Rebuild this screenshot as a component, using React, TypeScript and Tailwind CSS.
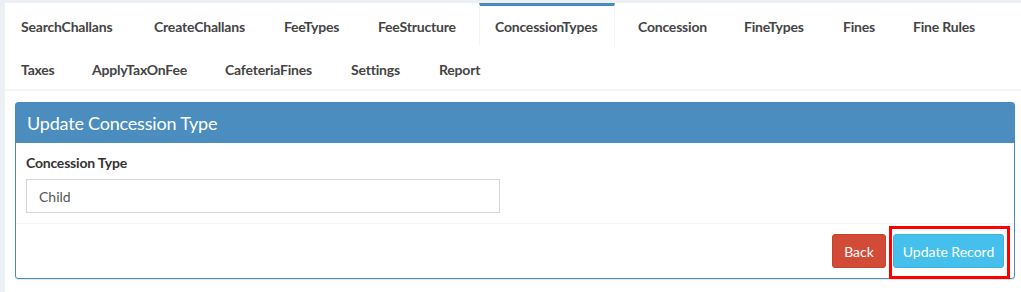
import React from "react";

type Tab = { label: string; w: string; active?: boolean };

const rowOne: Tab[] = [
  { label: "SearchChallans", w: "w-[128px]" },
  { label: "CreateChallans", w: "w-[125px]" },
  { label: "FeeTypes", w: "w-[89px]" },
  { label: "FeeStructure", w: "w-[112px]" },
  { label: "ConcessionTypes", w: "w-[136px]", active: true },
  { label: "Concession", w: "w-[101px]" },
  { label: "FineTypes", w: "w-[94px]" },
  { label: "Fines", w: "w-[65px]" },
  { label: "Fine Rules", w: "w-[95px]" },
];

const rowTwo: Tab[] = [
  { label: "Taxes", w: "w-[66px]" },
  { label: "ApplyTaxOnFee", w: "w-[128px]" },
  { label: "CafeteriaFines", w: "w-[121px]" },
  { label: "Settings", w: "w-[83px]" },
  { label: "Report", w: "w-[75px]" },
];

function TabItem({ tab }: { tab: Tab }) {
  return (
    <li
      className={`${tab.w} mr-[5px] h-[43px] border-t-[3px] ${
        tab.active
          ? "border-t-[#4a8bbd] border-x border-x-[#f4f4f4] mr-[7px]"
          : "border-t-transparent border-x border-x-transparent"
      }`}
    >
      <a className="block px-[15px] pt-[11px] text-[14px] leading-[20px] font-bold text-[#444] whitespace-nowrap tracking-[-0.2px]">
        {tab.label}
      </a>
    </li>
  );
}

export default function App() {
  return (
    <div
      className="min-h-screen bg-[#ecf0f5] pt-[3px] pl-[5px] flex flex-col"
      style={{ fontFamily: "Lato, 'Open Sans', sans-serif" }}
    >
      <div className="flex-1 bg-white flex flex-col">
        <div className="border-b-2 border-[#f4f4f4]">
          <ul className="flex">
            {rowOne.map((t) => (
              <TabItem key={t.label} tab={t} />
            ))}
          </ul>
          <ul className="flex">
            {rowTwo.map((t) => (
              <TabItem key={t.label} tab={t} />
            ))}
          </ul>
        </div>

        <div className="pt-[11px] pl-[10px] pr-[6px]">
          <div className="border border-[#4a8bbd] rounded-[3px] shadow-[0_1px_1px_rgba(0,0,0,0.1)]">
            <div className="bg-[#4a8dbe] h-[40px] px-[11px] flex items-center">
              <h3 className="text-[18px] text-white leading-none tracking-[-0.2px]">Update Concession Type</h3>
            </div>
            <div className="p-[10px]">
              <label className="block text-[14px] leading-[20px] font-bold text-[#333] mb-[6px] tracking-[-0.2px]">
                Concession Type
              </label>
              <input
                className="w-[474px] h-[34px] border border-[#d2d6de] px-[12px] text-[14px] text-[#555] outline-none"
                defaultValue="Child"
                style={{ fontFamily: "Lato, 'Open Sans', sans-serif" }}
              />
            </div>
            <div className="border-t border-[#f4f4f4] p-[10px] flex justify-end gap-[7px]">
              <button className="h-[34px] w-[54px] rounded-[3px] bg-[#d24b37] border border-[#c7412d] text-white text-[14px]">
                Back
              </button>
              <div className="relative">
                <button className="h-[34px] w-[111px] rounded-[3px] bg-[#45bfec] border border-[#3cb4e2] text-white text-[14px]">
                  Update Record
                </button>
                <div className="absolute -left-[4px] -right-[6px] -top-[8px] -bottom-[11px] border-[3px] border-[#ff0000]" />
              </div>
            </div>
          </div>
        </div>
      </div>
    </div>
  );
}
